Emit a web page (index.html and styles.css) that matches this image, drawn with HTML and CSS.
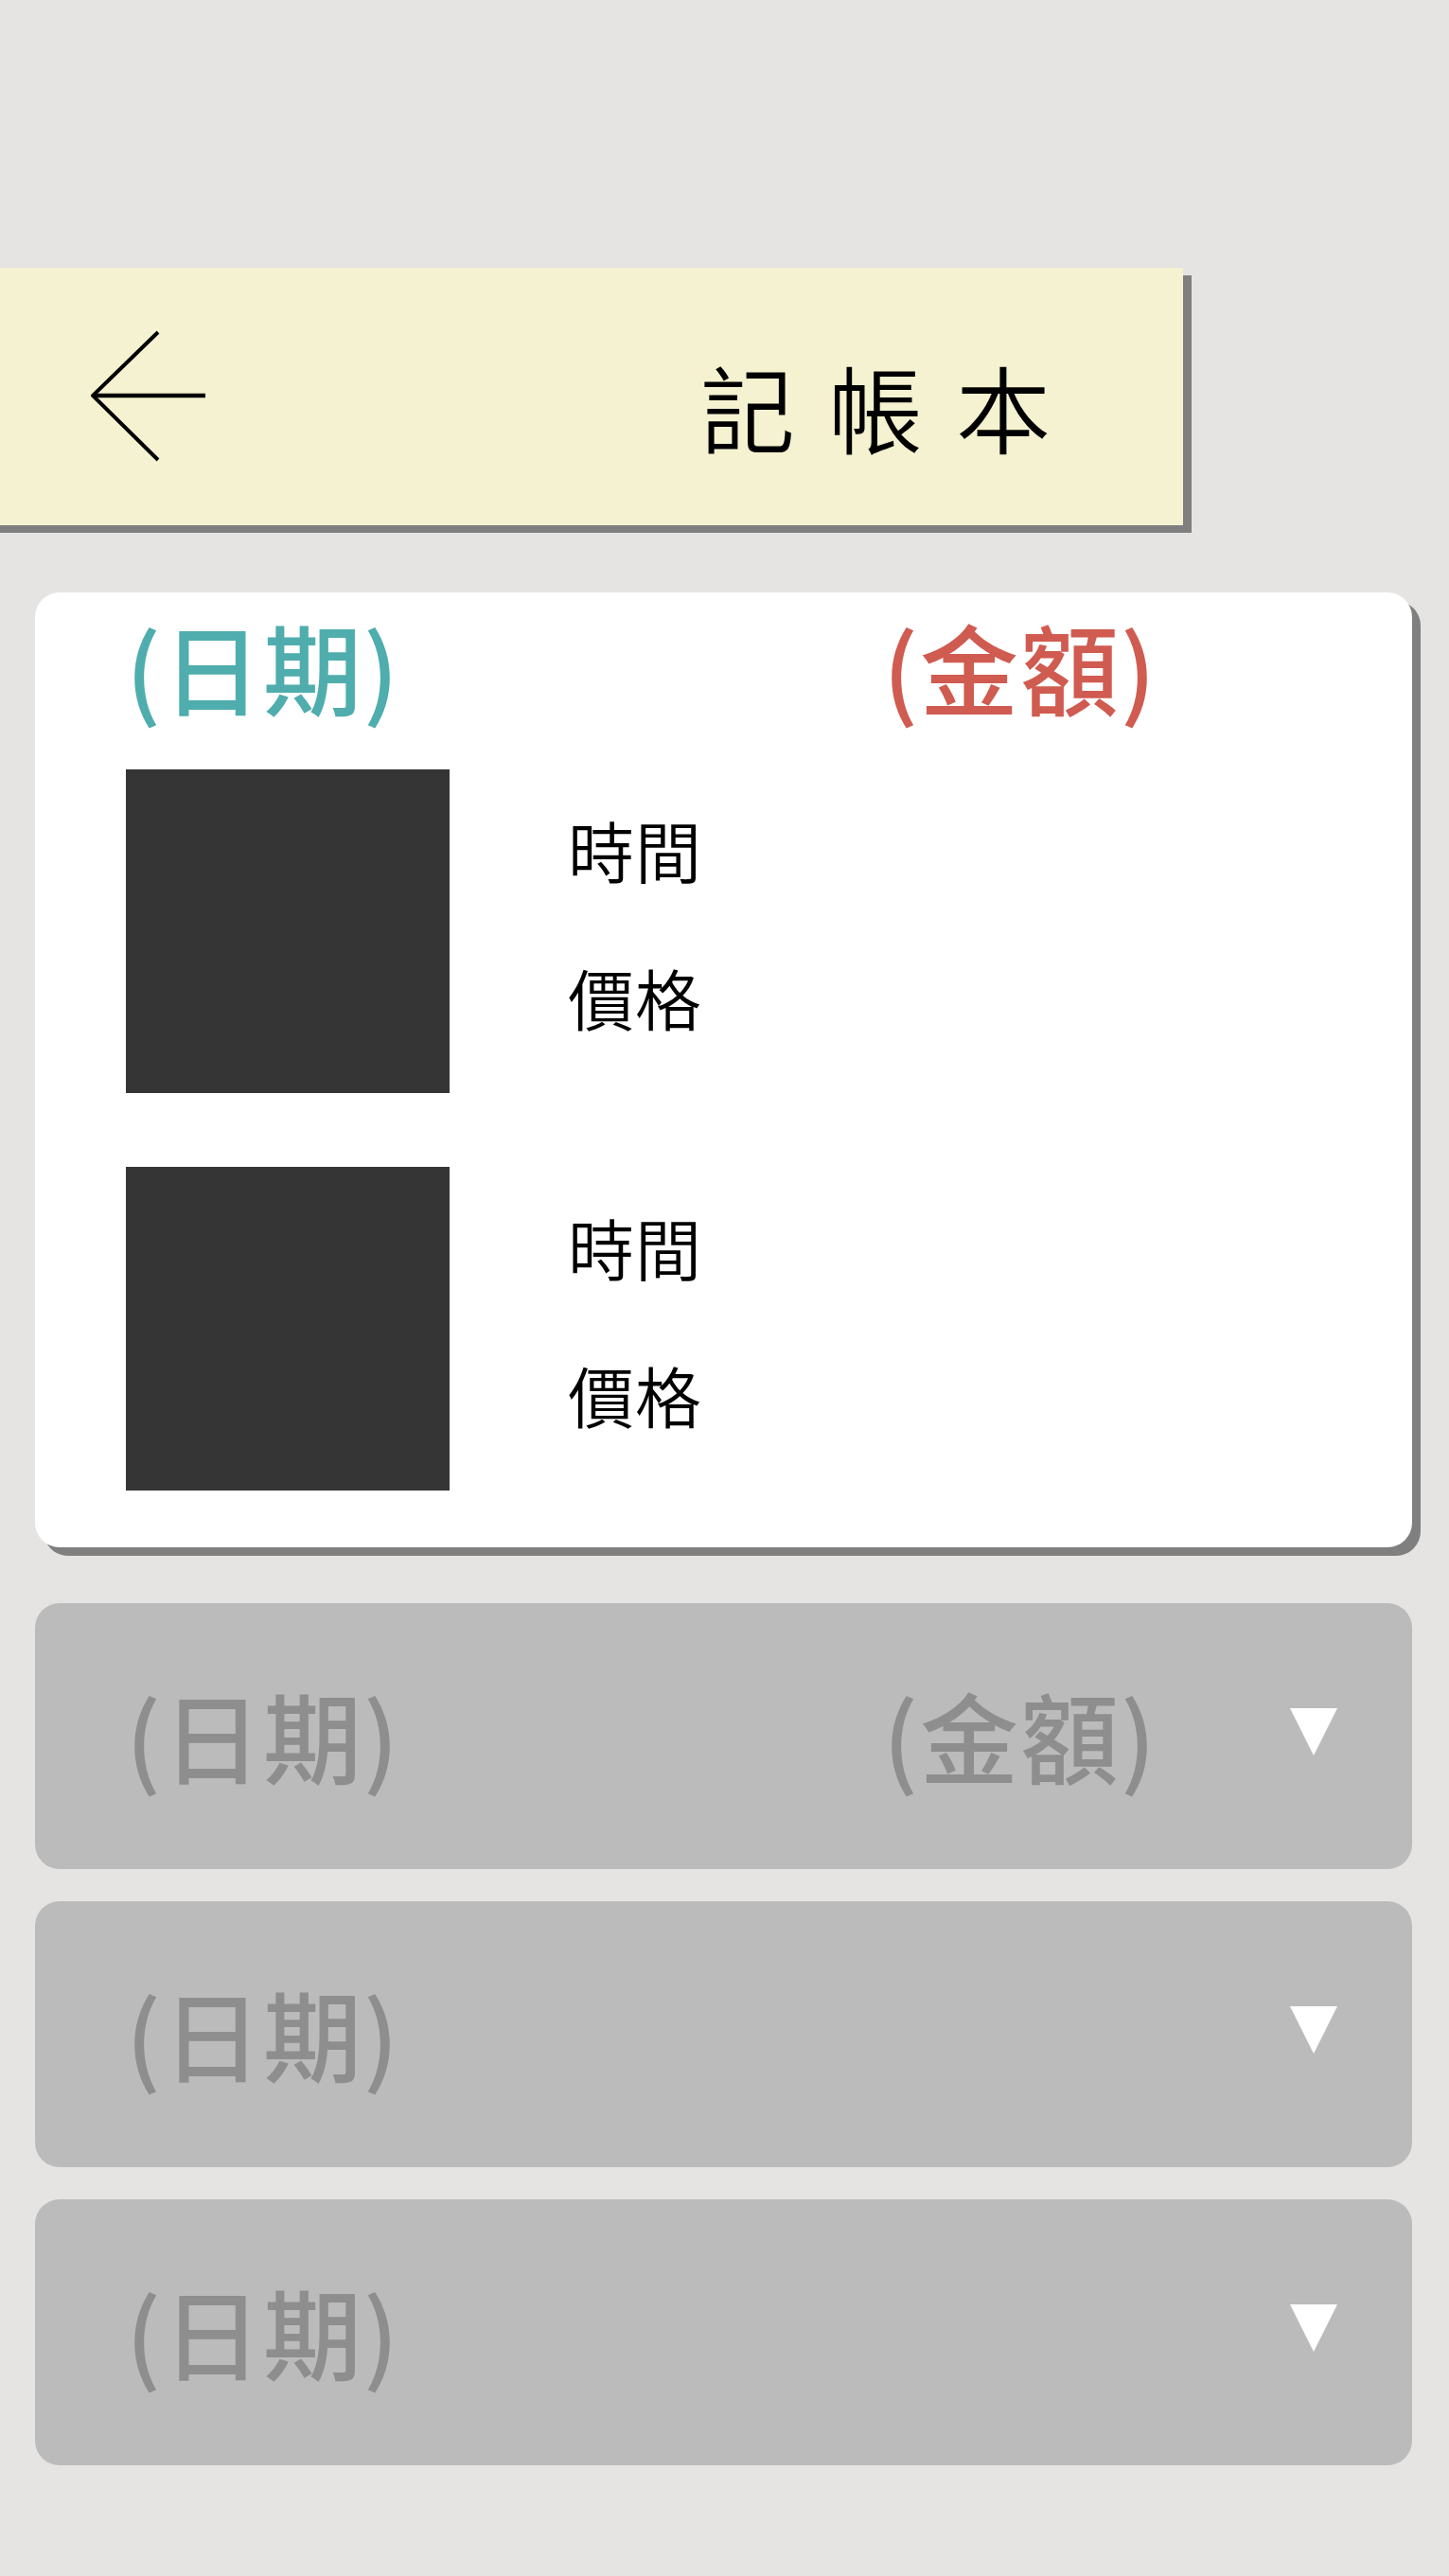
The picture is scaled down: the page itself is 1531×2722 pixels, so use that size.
FILE: index.html
```html
<!DOCTYPE html>
<html lang="zh-Hant">
<head>
<meta charset="utf-8">
<title>記帳本</title>
<link rel="stylesheet" href="styles.css">
</head>
<body>
<div class="page">
  <header class="topbar">
    <svg class="back" viewBox="0 0 124 140" width="124" height="140" aria-hidden="true">
      <polyline points="71,2 2,69 71,137" fill="none" stroke="#000" stroke-width="4"/>
      <line x1="2" y1="69" x2="121" y2="69" stroke="#000" stroke-width="4.5"/>
    </svg>
    <h1 class="title">記帳本</h1>
  </header>

  <section class="card card-open">
    <div class="row head-row">
      <span class="date date-teal">(日期)</span>
      <span class="amount amount-red">(金額)</span>
    </div>
    <div class="item">
      <div class="thumb"></div>
      <div class="meta">
        <span class="meta-text">時間</span>
        <span class="meta-text">價格</span>
      </div>
    </div>
    <div class="item item-second">
      <div class="thumb"></div>
      <div class="meta">
        <span class="meta-text">時間</span>
        <span class="meta-text">價格</span>
      </div>
    </div>
  </section>

  <section class="card card-closed">
    <div class="row">
      <span class="date date-gray">(日期)</span>
      <span class="amount amount-gray">(金額)</span>
      <span class="tri"></span>
    </div>
  </section>

  <section class="card card-closed">
    <div class="row">
      <span class="date date-gray">(日期)</span>
      <span class="tri"></span>
    </div>
  </section>

  <section class="card card-closed">
    <div class="row">
      <span class="date date-gray">(日期)</span>
      <span class="tri"></span>
    </div>
  </section>
</div>
</body>
</html>
```

FILE: styles.css
```css
* { box-sizing: border-box; }

html, body {
  margin: 0;
  padding: 0;
}

body {
  background: #e5e4e2;
  font-family: "Noto Sans CJK TC", "Noto Sans", sans-serif;
  width: 1531px;
  min-height: 2722px;
  overflow: hidden;
}

.page {
  padding-top: 283px;
  display: flex;
  flex-direction: column;
}

/* ---------- top bar ---------- */
.topbar {
  margin-left: -10px;
  width: 1260px;
  height: 272px;
  background: #f4f2d0;
  box-shadow: 9px 8px 0 #7f7f7f;
  display: flex;
  align-items: center;
  padding-left: 106px;
}

.back {
  display: block;
  flex: none;
}

.title {
  margin: 0 105px 0 auto;
  font-size: 100px;
  font-weight: 350;
  letter-spacing: 35px;
  line-height: 1;
  color: #000;
  padding-top: 20px;
}

/* ---------- cards ---------- */
.card {
  margin-left: 37px;
  width: 1455px;
  border-radius: 26px;
}

.card-open {
  margin-top: 71px;
  background: #fff;
  box-shadow: 9px 9px 0 #7f7f7f;
  padding: 26px 79px 60px 96px;
}

.card-closed {
  background: #bbbbbb;
  height: 281px;
  margin-top: 34px;
  padding: 0 79px 0 96px;
  display: flex;
  align-items: center;
}

.card-open + .card-closed {
  margin-top: 59px;
}

.row {
  display: flex;
  align-items: center;
  width: 100%;
}

.date,
.amount {
  font-size: 104px;
  font-weight: 500;
  line-height: 1;
  white-space: nowrap;
  letter-spacing: 2px;
}

.date { width: 800px; flex: none; }

.date-teal { color: #4fadad; }
.amount-red { color: #d05b50; }
.date-gray, .amount-gray { color: #8e8e8e; }

.card-closed .date,
.card-closed .amount {
  margin-top: -4px;
}

.tri {
  margin-left: auto;
  width: 0;
  height: 0;
  border-left: 25px solid transparent;
  border-right: 25px solid transparent;
  border-top: 50px solid #fff;
  margin-bottom: 9px;
}

/* ---------- items ---------- */
.item {
  display: flex;
  align-items: center;
  margin-top: 57px;
}

.item-second {
  margin-top: 78px;
}

.thumb {
  width: 342px;
  height: 342px;
  background: #343534;
  flex: none;
}

.meta {
  margin-left: 125px;
  display: flex;
  flex-direction: column;
  gap: 86px;
  margin-top: -16px;
}

.meta-text {
  font-size: 70px;
  font-weight: 350;
  line-height: 1;
  color: #000;
  letter-spacing: 1px;
}
```
